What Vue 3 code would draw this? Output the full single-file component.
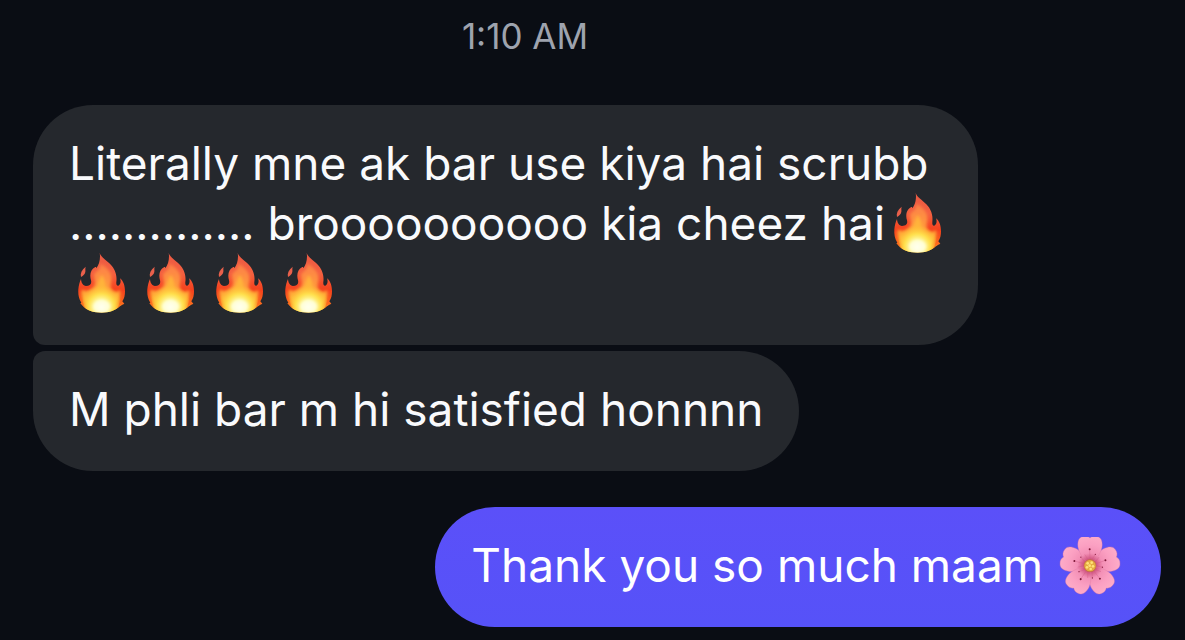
<script setup>
const fires = [1, 2, 3, 4, 5]
const petals = [72, 288, 144, 216, 0]
</script>

<template>
  <main class="chat">
    <svg class="defs" aria-hidden="true">
      <defs>
        <linearGradient id="flame-outer" x1="0" y1="0" x2="0" y2="1">
          <stop offset="0" stop-color="#ea5a44" />
          <stop offset="0.35" stop-color="#f4603f" />
          <stop offset="0.62" stop-color="#f5401c" />
          <stop offset="0.85" stop-color="#fb6a1c" />
          <stop offset="1" stop-color="#ffb52a" />
        </linearGradient>
        <linearGradient id="flame-mid" x1="0" y1="0" x2="0" y2="1">
          <stop offset="0" stop-color="#fc7f48" />
          <stop offset="0.5" stop-color="#ff9a3c" />
          <stop offset="1" stop-color="#ffc62a" />
        </linearGradient>
        <radialGradient id="flame-core" gradientUnits="userSpaceOnUse" cx="97" cy="162" r="66">
          <stop offset="0" stop-color="#fffff2" />
          <stop offset="0.3" stop-color="#fffcb0" />
          <stop offset="0.6" stop-color="#ffe750" stop-opacity="0.85" />
          <stop offset="1" stop-color="#ffc030" stop-opacity="0" />
        </radialGradient>
        <clipPath id="flame-clip">
          <path d="M92 0C96 13 111 20 124 34C137 47 145 66 142 87C141 95 144 99 148 98C154 95 157 86 153 76C163 83 168 98 168 115C168 127 166 136 160 145L166 152C160 155 157 157 153 160C140 172 121 179 98 179C73 179 53 172 42 160L34 151L37 149C29 137 27 123 28 109C29 97 32 87 36 78C37 90 42 98 51 99C62 99 69 94 66 82C61 64 65 49 79 42C81 41 82 43 82 46C91 35 95 15 92 0Z" />
        </clipPath>
        <filter id="soft-wide" x="-20%" y="-20%" width="140%" height="140%">
          <feGaussianBlur stdDeviation="4" />
        </filter>
        <radialGradient id="petal" gradientUnits="userSpaceOnUse" cx="0" cy="0" r="90">
          <stop offset="0" stop-color="#b82a58" />
          <stop offset="0.24" stop-color="#d45c88" />
          <stop offset="0.42" stop-color="#f390b6" />
          <stop offset="0.7" stop-color="#fba0c2" />
          <stop offset="1" stop-color="#feacc8" />
        </radialGradient>
        <clipPath id="blossom-clip">
          <rect y="6" width="207" height="174" />
        </clipPath>
        <symbol id="fire" viewBox="0 0 207 180">
          <path fill="#e9604b" d="M50 41C38 51 33 61 36 72C43 68 48 63 49 57C50 51 48 47 50 41Z" />
          <g clip-path="url(#flame-clip)">
            <rect x="20" width="160" height="180" fill="url(#flame-outer)" />
            <g filter="url(#soft-wide)">
              <path fill="url(#flame-mid)" d="M94 32C115 43 130 60 127 82C124 98 122 112 137 116C145 118 150 114 153 110C156 129 150 148 136 162C113 178 78 178 56 162C42 148 35 129 38 109C49 118 66 112 76 98C83 86 71 72 78 60C84 53 95 50 94 32Z" />
              <path fill="#ffb43a" d="M97 66C110 80 108 96 113 110C119 124 132 130 148 130C146 155 124 174 97 176C70 174 49 155 44 130C63 128 76 116 82 104C88 92 92 80 97 66Z" />
            </g>
            <ellipse cx="97" cy="138" rx="56" ry="52" fill="url(#flame-core)" />
            <ellipse cx="98" cy="160" rx="26" ry="18" fill="#ffffea" fill-opacity="0.7" filter="url(#soft-wide)" />
          </g>
        </symbol>
        <symbol id="blossom" viewBox="0 0 207 180">
          <g clip-path="url(#blossom-clip)">
            <g transform="translate(102 92)">
              <g v-for="angle in petals" :key="angle" :transform="`rotate(${angle})`">
                <path fill="url(#petal)" stroke="#df79a2" stroke-width="1" d="M0 -2C-16 -16 -32 -34 -36 -56C-38 -72 -34 -84 -23 -87C-14 -91 -5 -88 0 -83C5 -88 14 -91 23 -87C34 -84 38 -72 36 -56C32 -34 16 -16 0 -2Z" />
                <path fill="none" stroke="#cf5580" stroke-width="1" d="M0 -16L-1 -48M5 -17L16 -34M-5 -17L-16 -34" />
                <circle cx="-1" cy="-49" r="3" fill="#7d1838" />
                <circle cx="16" cy="-34" r="2" fill="#8c1f42" />
              </g>
              <circle r="19" fill="#c46f45" />
              <circle r="17" fill="#e5ac42" />
              <g fill="#ffe277">
                <circle cx="-7" cy="-7" r="4" />
                <circle cx="5" cy="-9" r="4" />
                <circle cx="9" cy="2" r="4" />
                <circle cx="-1" cy="0" r="4" />
                <circle cx="-9" cy="5" r="4" />
                <circle cx="2" cy="10" r="4" />
              </g>
            </g>
          </g>
        </symbol>
      </defs>
    </svg>

    <time class="stamp">1:10 AM</time>

    <section class="group received">
      <p class="bubble first">
        Literally mne ak bar use kiya hai scrubb .............. broooooooooo kia cheez hai<template v-for="n in fires" :key="n"><svg class="emoji" role="img" aria-label="fire"><use href="#fire" /></svg><wbr /></template>
      </p>
      <p class="bubble last">M phli bar m hi satisfied honnnn</p>
    </section>

    <section class="group sent">
      <p class="bubble">Thank you so much maam <svg class="emoji" role="img" aria-label="cherry blossom"><use href="#blossom" /></svg></p>
    </section>
  </main>
</template>

<style>
body {
  margin: 0;
  background: #0a0d14;
}
</style>

<style scoped>
.chat {
  box-sizing: border-box;
  min-height: 100vh;
  display: flex;
  flex-direction: column;
  padding: 11px 24px 12px 33px;
  background: #0a0d14;
  color: #f9fafc;
  font-family: Inter, "Liberation Sans", sans-serif;
}

.defs {
  position: absolute;
  width: 0;
  height: 0;
}

.stamp {
  padding-right: 144px;
  text-align: center;
  font-size: 35px;
  line-height: 50px;
  color: #9ea3ae;
}

.group {
  display: flex;
  flex-direction: column;
  gap: 6px;
}

.received {
  align-items: flex-start;
  margin-top: 44px;
}

.sent {
  align-items: flex-end;
  margin-top: 36px;
}

.bubble {
  box-sizing: border-box;
  max-width: min(84%, 945px);
  margin: 0;
  padding: 28px 36px 32px;
  border-radius: 60px;
  background: #25282d;
  font-size: 46px;
  line-height: 60px;
}

.first {
  padding-right: 20px;
  border-bottom-left-radius: 12px;
}

.last {
  border-top-left-radius: 12px;
}

.sent .bubble {
  background: linear-gradient(#5b50f9, #5652f8);
  color: #ffffff;
}

.emoji {
  width: 69px;
  height: 60px;
  vertical-align: top;
}
</style>
